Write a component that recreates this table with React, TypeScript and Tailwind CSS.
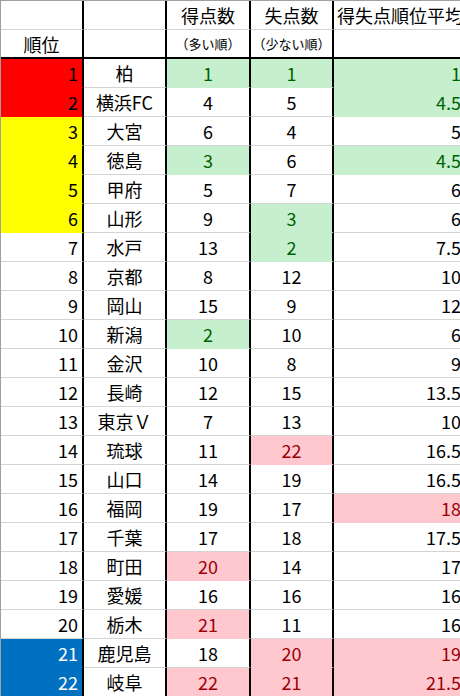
import React from 'react';

type Fill = 'none' | 'red' | 'yellow' | 'blue' | 'green' | 'pink';

interface Team {
  rank: number;
  name: string;
  scored: number;
  conceded: number;
  avg: string;
  hl: { c?: Fill; d?: Fill; e?: Fill };
}

const TEAMS: Team[] = [
  { rank: 1, name: '柏', scored: 1, conceded: 1, avg: '1', hl: { c: 'green', d: 'green', e: 'green' } },
  { rank: 2, name: '横浜FC', scored: 4, conceded: 5, avg: '4.5', hl: { e: 'green' } },
  { rank: 3, name: '大宮', scored: 6, conceded: 4, avg: '5', hl: {} },
  { rank: 4, name: '徳島', scored: 3, conceded: 6, avg: '4.5', hl: { c: 'green', e: 'green' } },
  { rank: 5, name: '甲府', scored: 5, conceded: 7, avg: '6', hl: {} },
  { rank: 6, name: '山形', scored: 9, conceded: 3, avg: '6', hl: { d: 'green' } },
  { rank: 7, name: '水戸', scored: 13, conceded: 2, avg: '7.5', hl: { d: 'green' } },
  { rank: 8, name: '京都', scored: 8, conceded: 12, avg: '10', hl: {} },
  { rank: 9, name: '岡山', scored: 15, conceded: 9, avg: '12', hl: {} },
  { rank: 10, name: '新潟', scored: 2, conceded: 10, avg: '6', hl: { c: 'green' } },
  { rank: 11, name: '金沢', scored: 10, conceded: 8, avg: '9', hl: {} },
  { rank: 12, name: '長崎', scored: 12, conceded: 15, avg: '13.5', hl: {} },
  { rank: 13, name: '東京Ｖ', scored: 7, conceded: 13, avg: '10', hl: {} },
  { rank: 14, name: '琉球', scored: 11, conceded: 22, avg: '16.5', hl: { d: 'pink' } },
  { rank: 15, name: '山口', scored: 14, conceded: 19, avg: '16.5', hl: {} },
  { rank: 16, name: '福岡', scored: 19, conceded: 17, avg: '18', hl: { e: 'pink' } },
  { rank: 17, name: '千葉', scored: 17, conceded: 18, avg: '17.5', hl: {} },
  { rank: 18, name: '町田', scored: 20, conceded: 14, avg: '17', hl: { c: 'pink' } },
  { rank: 19, name: '愛媛', scored: 16, conceded: 16, avg: '16', hl: {} },
  { rank: 20, name: '栃木', scored: 21, conceded: 11, avg: '16', hl: { c: 'pink' } },
  { rank: 21, name: '鹿児島', scored: 18, conceded: 20, avg: '19', hl: { d: 'pink', e: 'pink' } },
  { rank: 22, name: '岐阜', scored: 22, conceded: 21, avg: '21.5', hl: { c: 'pink', d: 'pink', e: 'pink' } },
];

// fill + matching bottom border so coloured blocks have no gridline through them
const FILL_CLASS: Record<Fill, string> = {
  none: 'bg-white text-black border-b-[#d4d4d4]',
  red: 'bg-[#ff0000] text-black border-b-[#ff0000]',
  yellow: 'bg-[#ffff00] text-black border-b-[#ffff00]',
  blue: 'bg-[#0070c0] text-white border-b-[#0070c0]',
  green: 'bg-[#c6efce] text-[#006100] border-b-[#c6efce]',
  pink: 'bg-[#ffc7ce] text-[#9c0006] border-b-[#ffc7ce]',
};

const ALIGN_CLASS = {
  left: 'justify-start pl-[3px]',
  center: 'justify-center',
  right: 'justify-end pr-[4px]',
};

interface CellProps {
  children?: React.ReactNode;
  fill?: Fill;
  align?: keyof typeof ALIGN_CLASS;
  divider?: boolean;
  className?: string;
}

const Cell: React.FC<CellProps> = ({ children, fill = 'none', align = 'center', divider = true, className = '' }) => (
  <div
    className={`flex h-[29px] items-center overflow-visible whitespace-nowrap border-b leading-none ${
      divider ? 'border-r-2 border-r-black' : ''
    } ${FILL_CLASS[fill]} ${ALIGN_CLASS[align]} ${className}`}
  >
    {children}
  </div>
);

const rankFill = (rank: number): Fill => {
  if (rank <= 2) return 'red';
  if (rank <= 6) return 'yellow';
  if (rank >= 21) return 'blue';
  return 'none';
};

const HeaderRows: React.FC = () => (
  <>
    <Cell />
    <Cell />
    <Cell className="text-[18px] text-[#222]">得点数</Cell>
    <Cell className="text-[18px] text-[#222]">失点数</Cell>
    <Cell align="left" divider={false} className="text-[18px] text-[#222]">
      得失点順位平均
    </Cell>

    <Cell className="h-[29px] border-b-2 !border-b-black text-[18px] text-[#222]">順位</Cell>
    <Cell className="border-b-2 !border-b-black" />
    <Cell className="border-b-2 !border-b-black text-[13px] text-[#333]">（多い順）</Cell>
    <Cell className="border-b-2 !border-b-black text-[13px] text-[#333]">（少ない順）</Cell>
    <Cell divider={false} className="border-b-2 !border-b-black" />
  </>
);

const TeamRow: React.FC<{ team: Team }> = ({ team }) => (
  <>
    <Cell fill={rankFill(team.rank)} align="right">{team.rank}</Cell>
    <Cell>{team.name}</Cell>
    <Cell fill={team.hl.c}>{team.scored}</Cell>
    <Cell fill={team.hl.d}>{team.conceded}</Cell>
    <Cell fill={team.hl.e} align="right" divider={false}>{team.avg}</Cell>
  </>
);

const App: React.FC = () => (
  <div
    className="h-[696px] w-[460px] overflow-hidden bg-white"
    style={{ fontFamily: '"Noto Sans CJK JP", "Noto Sans", sans-serif' }}
  >
    <div className="grid w-[465px] grid-cols-[83px_83px_84px_83px_131px] border-l border-t border-[#a0a0a0] text-[18px]">
      <HeaderRows />
      {TEAMS.map((team) => (
        <TeamRow key={team.rank} team={team} />
      ))}
    </div>
  </div>
);

export default App;
